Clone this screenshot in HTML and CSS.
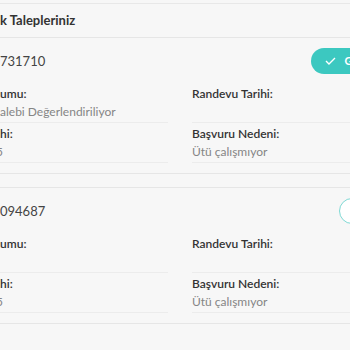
FILE: index.html
```html
<!DOCTYPE html>
<html>
<head>
  <meta charset="utf-8">
  <title>Destek Talepleriniz</title>
  <link rel="stylesheet" href="styles.css">
</head>
<body>
  <div class="page">
    <div class="topbar"></div>
    <h2 class="title">k Talepleriniz</h2>

    <div class="request">
      <div class="request-head">
        <span class="request-no">731710</span>
        <button type="button" class="btn btn-done">
          <svg width="11" height="8" viewBox="0 0 11 8"><polyline points="1,4 4,7 10,1" fill="none" stroke="#fff" stroke-width="1.4"/></svg>
          Görüntüle
        </button>
      </div>
      <div class="request-grid">
        <div class="cell">
          <div class="label">umu:</div>
          <div class="value">alebi Değerlendiriliyor</div>
        </div>
        <div class="cell">
          <div class="label">Randevu Tarihi:</div>
          <div class="value"></div>
        </div>
        <div class="cell">
          <div class="label">hi:</div>
          <div class="value"><span class="cut">5</span></div>
        </div>
        <div class="cell">
          <div class="label">Başvuru Nedeni:</div>
          <div class="value">Ütü çalışmıyor</div>
        </div>
      </div>
    </div>

    <div class="request">
      <div class="request-head">
        <span class="request-no">094687</span>
        <button type="button" class="btn btn-outline">Onayla</button>
      </div>
      <div class="request-grid">
        <div class="cell">
          <div class="label">umu:</div>
          <div class="value"></div>
        </div>
        <div class="cell">
          <div class="label">Randevu Tarihi:</div>
          <div class="value"></div>
        </div>
        <div class="cell">
          <div class="label">hi:</div>
          <div class="value"><span class="cut">5</span></div>
        </div>
        <div class="cell">
          <div class="label">Başvuru Nedeni:</div>
          <div class="value">Ütü çalışmıyor</div>
        </div>
      </div>
    </div>
  </div>
</body>
</html>
```

FILE: styles.css
```css
html, body {
  margin: 0;
  overflow: hidden;
}

body {
  background: #f7f7f7;
  font-family: Lato, 'Noto Sans', sans-serif;
  color: #333;
}

.page {
  width: 350px;
}

.topbar {
  height: 3px;
  border-bottom: 1px solid #e8e8e8;
}

.title {
  margin: 0;
  height: 33px;
  line-height: 33px;
  font-size: 13px;
  font-weight: 700;
  color: #333;
}

.request {
  border-top: 1px solid #e6e6e6;
  border-bottom: 1px solid #e6e6e6;
  padding-bottom: 10px;
  margin-bottom: 13px;
}

.request-head {
  height: 45px;
  display: flex;
  align-items: center;
  justify-content: space-between;
}

.request-no {
  font-size: 13px;
  color: #444;
}

.btn {
  flex-shrink: 0;
  height: 26px;
  border-radius: 13px;
  font-family: inherit;
  font-size: 11px;
  font-weight: 700;
  display: flex;
  align-items: center;
  gap: 8px;
  cursor: pointer;
}

.btn-done {
  background: #3cc8c0;
  border: none;
  color: white;
  padding: 0 14px;
  margin-right: -58px;
}

.btn-outline {
  background: white;
  border: 1px solid #7fd9d4;
  color: #3cc8c0;
  padding: 0 16px;
  margin-right: -58px;
}

.request-grid {
  display: grid;
  grid-template-columns: 168px 1fr;
  column-gap: 24px;
}

.cell {
  padding: 2px 0 1px;
  border-bottom: 1px solid #ececec;
}

.label {
  line-height: 18px;
  font-size: 12px;
  font-weight: 600;
  color: #333;
}

.value {
  height: 18px;
  line-height: 18px;
  font-size: 12px;
  color: #858585;
}

.cut {
  margin-left: -4px;
}
```
